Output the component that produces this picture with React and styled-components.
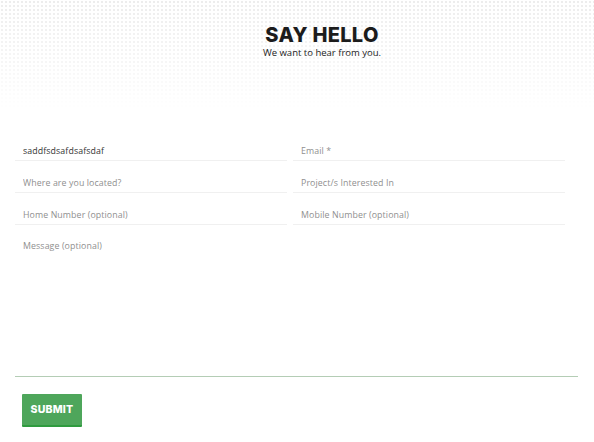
import React from "react";
import styled, { createGlobalStyle } from "styled-components";

const GlobalStyle = createGlobalStyle`
  html, body {
    margin: 0;
    padding: 0;
    background: #fff;
    font-family: "Open Sans", "Liberation Sans", sans-serif;
  }
  * { box-sizing: border-box; }
`;

const Page = styled.div`
  width: 594px;
  height: 442px;
  overflow: hidden;
  position: relative;
`;

const Hero = styled.header`
  position: relative;
  height: 129px;
  padding: 25px 0 0 50px;
  text-align: center;
  &::before {
    content: "";
    position: absolute;
    inset: 0 0 18px 0;
    background-image: radial-gradient(circle, #ededed 0.8px, transparent 1.2px);
    background-size: 4px 4px;
    -webkit-mask-image: linear-gradient(to bottom, #000 0%, rgba(0,0,0,0.6) 45%, transparent 100%);
    mask-image: linear-gradient(to bottom, #000 0%, rgba(0,0,0,0.6) 45%, transparent 100%);
  }
`;

const Title = styled.h1`
  position: relative;
  margin: 0;
  font-family: "Inter", "Liberation Sans", sans-serif;
  font-weight: 800;
  font-size: 20px;
  line-height: 20px;
  letter-spacing: 0.3px;
  color: #1c1c1c;
`;

const Subtitle = styled.p`
  position: relative;
  margin: 2px 0 0;
  font-family: "Open Sans", "Liberation Sans", sans-serif;
  font-size: 9.5px;
  line-height: 11px;
  color: #222;
`;

const Form = styled.form`
  padding: 0 16px 0 15px;
`;

const Grid = styled.div`
  display: grid;
  grid-template-columns: 272px 272px;
  column-gap: 6px;
`;

const Field = styled.input`
  display: block;
  width: 100%;
  height: 32px;
  padding: 13px 8px 0;
  border: 0;
  border-bottom: 1px solid #f0f0f0;
  background: transparent;
  font-family: "Open Sans", "Liberation Sans", sans-serif;
  font-size: 8.8px;
  letter-spacing: 0.1px;
  color: #333;
  outline: none;
  &::placeholder { color: #8f8f8f; }
`;

const Message = styled.textarea`
  display: block;
  width: 100%;
  height: 152px;
  padding: 15px 8px 0;
  border: 0;
  border-bottom: 1px solid #b4cdb5;
  resize: none;
  font-family: "Open Sans", "Liberation Sans", sans-serif;
  font-size: 8.8px;
  letter-spacing: 0.1px;
  line-height: 12px;
  color: #333;
  outline: none;
  &::placeholder { color: #8f8f8f; }
`;

const Submit = styled.button`
  margin: 17px 0 0 7px;
  width: 60px;
  height: 33px;
  border: 0;
  border-bottom: 2px solid #2f9b3f;
  border-radius: 1px;
  background: #4ea65b;
  color: #fff;
  font-family: "Inter", "Liberation Sans", sans-serif;
  font-weight: 800;
  font-size: 10.5px;
  letter-spacing: 0.2px;
  cursor: pointer;
`;

export default function App() {
  return (
    <Page>
      <GlobalStyle />
      <Hero>
        <Title>SAY HELLO</Title>
        <Subtitle>We want to hear from you.</Subtitle>
      </Hero>
      <Form onSubmit={(e) => e.preventDefault()}>
        <Grid>
          <Field defaultValue="saddfsdsafdsafsdaf" />
          <Field placeholder="Email *" />
          <Field placeholder="Where are you located?" />
          <Field placeholder="Project/s Interested In" />
          <Field placeholder="Home Number (optional)" />
          <Field placeholder="Mobile Number (optional)" />
        </Grid>
        <Message placeholder="Message (optional)" />
        <Submit type="submit">SUBMIT</Submit>
      </Form>
    </Page>
  );
}
